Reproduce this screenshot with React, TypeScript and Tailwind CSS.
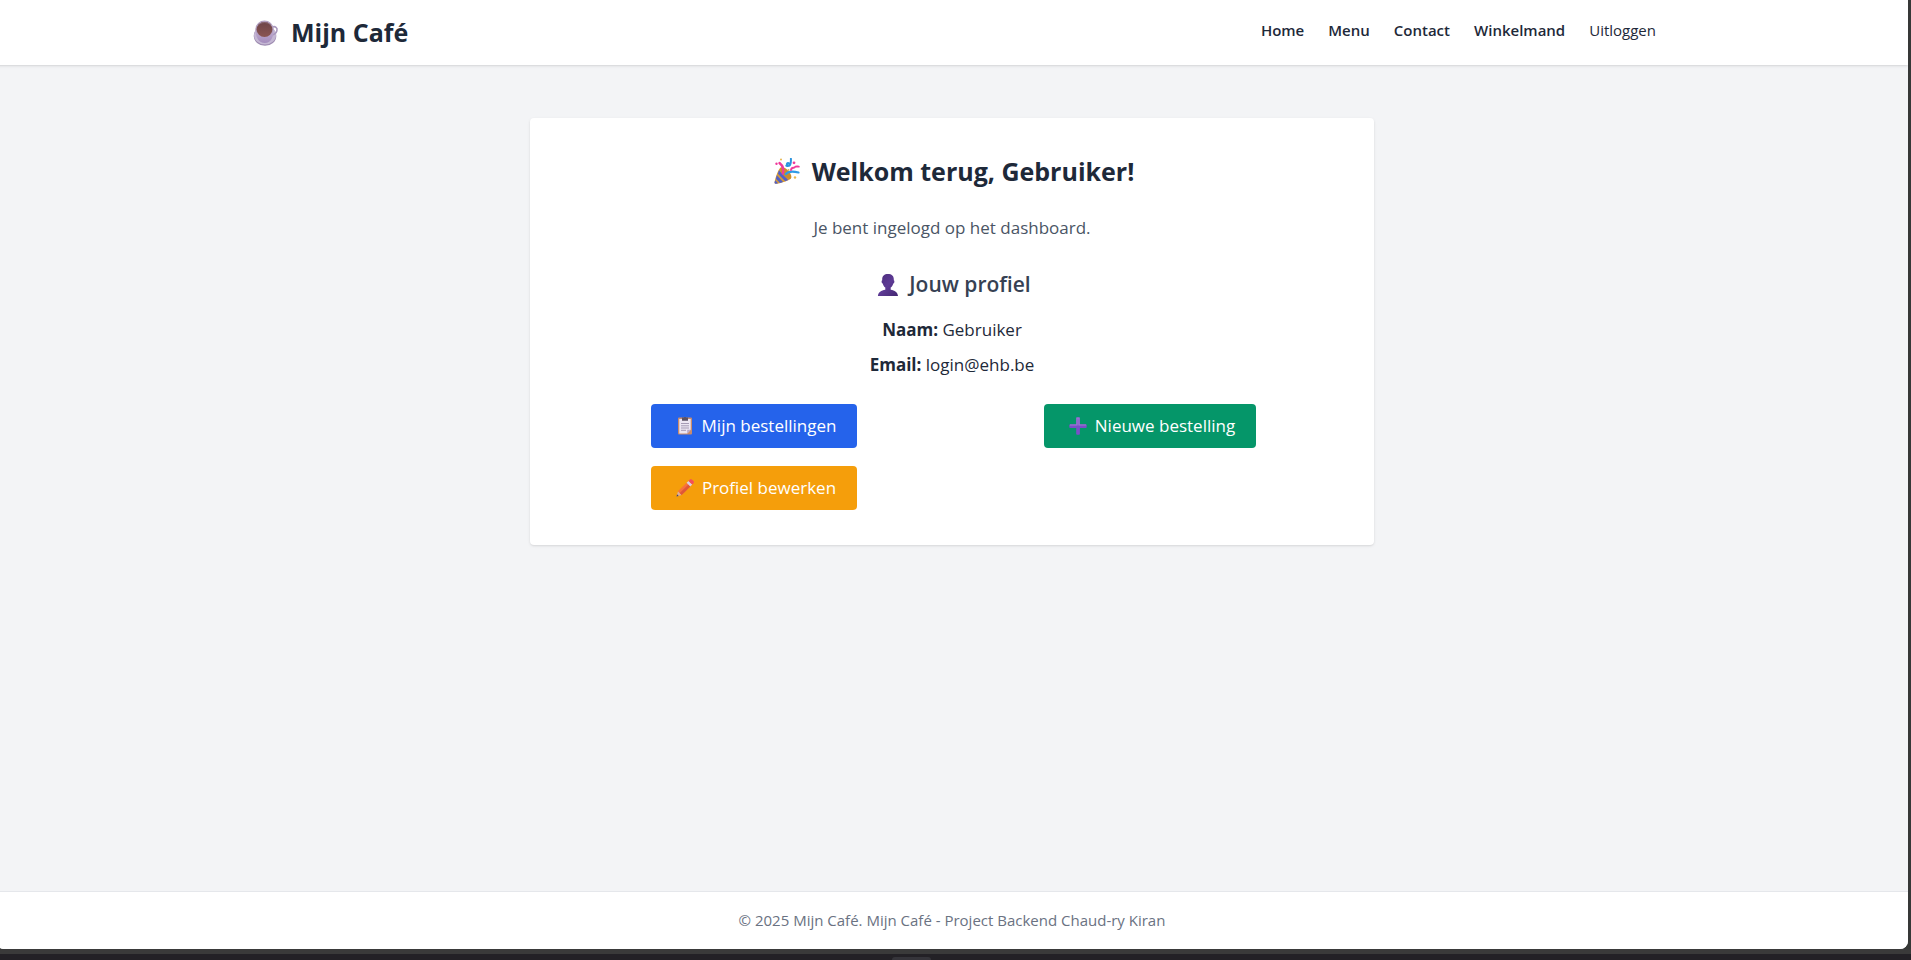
import type { ReactNode } from "react";

function CoffeeIcon() {
  return (
    <svg viewBox="0 0 26 26" className="size-[26px] shrink-0" aria-hidden="true">
      <defs>
        <linearGradient id="cup" x1="0" y1="0" x2="0" y2="1">
          <stop offset="0" stopColor="#c3b0d2" />
          <stop offset="1" stopColor="#a48cbd" />
        </linearGradient>
        <linearGradient id="brew" x1="0" y1="0" x2="0" y2="1">
          <stop offset="0" stopColor="#6e4448" />
          <stop offset="1" stopColor="#8a5552" />
        </linearGradient>
      </defs>
      <ellipse cx="12" cy="16" rx="11.3" ry="9.800" fill="#9d8bb0" />
      <ellipse cx="12" cy="15" rx="11" ry="9.600" fill="#c4b7d3" />
      <path d="M19 7.200c3.200-1.500 5.800.6 4.900 3.600-.7 2.400-3 4-5.400 4.300" fill="none" stroke="#a998bd" strokeWidth="1.600" />
      <path d="M2.300 8.500c0 8.500 3.400 14.500 9.500 14.500s9-6 9-14.500z" fill="url(#cup)" />
      <ellipse cx="11.500" cy="8.800" rx="9" ry="8.300" fill="#b3a0c0" />
      <ellipse cx="11.500" cy="9.500" rx="7.900" ry="7.500" fill="url(#brew)" />
      <path d="M5.500 5c2.700-3 8.700-3.500 12 0" fill="none" stroke="#8a6772" strokeWidth="1" />
    </svg>
  );
}

function PartyIcon() {
  return (
    <svg viewBox="0 0 26 26" className="size-[26px] shrink-0" aria-hidden="true">
      <path d="M6.500 9.500 17 20.500c-3 2.500-9 4.300-14.500 5.300C.8 26 .3 25.300.6 24 1.700 19 3.800 12.500 6.500 9.500Z" fill="#d79a35" />
      <path d="M5 12.300 14.200 22l-3 1.300-7.300-7.500zM2.800 17.300l6.300 6.700-3.100.9-4.100-4.200zM1.200 22.300l2.900 3-2 .4c-1.200.2-1.700-.3-1.500-1.400z" fill="#5260c8" />
      <ellipse cx="11.800" cy="15" rx="3.400" ry="7.400" transform="rotate(-43 11.800 15)" fill="#c98d2b" />
      <path d="M8.800 15.500c1-3 1.200-6.800-3.300-10.500" fill="none" stroke="#ef3a9b" strokeWidth="2.400" strokeLinecap="round" />
      <path d="M12.300 7.600c2.500 1.300 4-.7 2.700-2.300-1.300-1.200-3 .6-1.300 2.200 2 1.200 3.500-.8 3.200-6.700" fill="none" stroke="#2b94df" strokeWidth="2" strokeLinecap="round" />
      <path d="M11.800 16.200c2-2.700 6.200-3.300 12.700-1.700" fill="none" stroke="#2f9ae5" strokeWidth="2.200" strokeLinecap="round" />
      <path d="M17 12c.2-3.200 3.400-1.500 4-3 .5-.8 2-.5 3.800-.4" fill="none" stroke="#ef3a9b" strokeWidth="1.900" strokeLinecap="round" />
      <circle cx="2.500" cy="5.800" r="1.200" fill="#ef3a9b" />
      <circle cx="20" cy="4.800" r="1.400" fill="#ef3a9b" />
      <circle cx="7" cy="1.600" r="1" fill="#e7b64c" />
      <circle cx="21" cy="19.500" r="1.200" fill="#e7b64c" />
      <circle cx="14.500" cy="12" r="1" fill="#e7b64c" />
    </svg>
  );
}

function PersonIcon() {
  return (
    <svg viewBox="0 0 22 22" className="size-[22px] shrink-0" aria-hidden="true">
      <defs>
        <linearGradient id="person" x1="0" y1="0" x2="1" y2="1">
          <stop offset="0" stopColor="#4b2d7b" />
          <stop offset="0.500" stopColor="#5d3a94" />
          <stop offset="1" stopColor="#432770" />
        </linearGradient>
      </defs>
      <path
        d="M11 0c3.700 0 5.800 2 5.800 5v1.200c.9.200.9 3-.5 3.200-.5 1.900-1.500 3.300-2.600 4.100v2.300c4 .5 7 2.700 7.300 6.200H.9c.3-3.500 3.400-5.700 7.400-6.200v-2.300c-1.100-.8-2.100-2.200-2.600-4.100-1.400-.2-1.400-3-.5-3.200V5C5.200 2 7.300 0 11 0Z"
        fill="url(#person)"
      />
    </svg>
  );
}

function ClipboardIcon() {
  return (
    <svg viewBox="0 0 18 18" className="size-[18px] shrink-0" aria-hidden="true">
      <rect x="2" y="0.500" width="14" height="17" rx="1" fill="#c98b6b" />
      <path d="M3.300 2h11.400v10.800l-3.500 3.700H3.300z" fill="#ece6f3" />
      <path d="M14.700 12.800h-3.500v3.700z" fill="#b9a9cb" />
      <path d="M6 .5h1.800C8-.2 10-.2 10.200.500H12v3.300H6z" fill="#5b5264" />
      <path d="M5 6.500h8M5 8.800h8M5 11h8M5 13.300h5" stroke="#a59ab5" strokeWidth="1" />
    </svg>
  );
}

function PlusIcon() {
  return (
    <svg viewBox="0 0 18 18" className="size-[18px] shrink-0" aria-hidden="true">
      <rect x="0.300" y="7.300" width="17.400" height="3.600" rx="0.900" fill="#7a4fc9" />
      <rect x="7.200" y="0.300" width="3.700" height="17.400" rx="0.900" fill="#7a4fc9" />
      <path d="M1 8h7V1h2v7h7" fill="none" stroke="#9c7fd0" strokeWidth="1.200" />
    </svg>
  );
}

function PencilIcon() {
  return (
    <svg viewBox="0 0 18 18" className="size-[18px] shrink-0" aria-hidden="true">
      <path d="M.5 17.500 2 12.200l3.700 3.700z" fill="#dcae9a" />
      <path d="m.5 17.500.6-2.200 1.600 1.600z" fill="#49405c" />
      <path d="m2 12.200 8.600-8.500 3.700 3.700-8.600 8.500z" fill="#f8713c" />
      <path d="m3.800 14 8.600-8.500 1.900 1.900-8.600 8.500z" fill="#df5738" />
      <path d="m10.600 3.700 1.900-1.800 3.700 3.700-1.900 1.800z" fill="#d8cfe6" />
      <path d="m12.500 1.900 1.300-1.300c.7-.6 1.400-.6 2.100 0l1.500 1.500c.7.700.7 1.500.1 2.200l-1.300 1.300z" fill="#f4505a" />
    </svg>
  );
}

const links = ["Home", "Menu", "Contact", "Winkelmand"];

function Action({ color, icon, children }: { color: string; icon: ReactNode; children: ReactNode }) {
  return (
    <a
      href="#"
      className={`flex h-11 items-center gap-2 rounded pr-[21px] pl-[25px] text-[17px] whitespace-nowrap text-white ${color}`}
    >
      {icon}
      {children}
    </a>
  );
}

export default function App() {
  return (
    <div className="flex h-screen flex-col overflow-hidden bg-[#232126] font-['Open_Sans','Noto_Sans',sans-serif] text-gray-800">
      <div className="flex flex-1 flex-col border-b-[5px] border-[#3a3a3a] bg-[#363837] pr-[3px]">
        <div className="-ml-1 flex flex-1 flex-col overflow-hidden rounded-b-lg bg-gray-100">
          <header className="z-10 bg-white shadow">
            <div className="mx-auto flex h-[65px] max-w-[1408px] items-center justify-between pl-[5px]">
              <a href="#" className="flex items-center gap-3 text-[25px] font-bold">
                <CoffeeIcon />
                Mijn Café
              </a>
              <nav className="flex items-center gap-6 pb-1 text-[15px]">
                {links.map((label) => (
                  <a key={label} href="#" className="font-semibold">
                    {label}
                  </a>
                ))}
                <button type="button">Uitloggen</button>
              </nav>
            </div>
          </header>

          <main className="flex-1 pt-[53px]">
            <section className="mx-auto max-w-[844px] rounded bg-white p-[35px] text-center shadow">
              <h1 className="mb-[26px] flex items-center justify-center gap-3 pl-1 text-[25px] leading-9 font-bold">
                <PartyIcon />
                Welkom terug, Gebruiker!
              </h1>
              <p className="mb-7 text-[17px] leading-[26px] text-gray-600">Je bent ingelogd op het dashboard.</p>
              <h2 className="mb-[17px] flex items-center justify-center gap-[10px] pl-1 text-[21px] leading-[31px] font-semibold text-gray-700">
                <PersonIcon />
                Jouw profiel
              </h2>
              <p className="mb-[9px] text-[17px] leading-[26px]">
                <strong>Naam:</strong> Gebruiker
              </p>
              <p className="text-[17px] leading-[26px]">
                <strong>Email:</strong> login@ehb.be
              </p>
              <div className="mt-[26px] grid grid-cols-2 justify-items-center gap-[18px]">
                <Action color="bg-[#2563eb]" icon={<ClipboardIcon />}>
                  Mijn bestellingen
                </Action>
                <Action color="bg-[#059669]" icon={<PlusIcon />}>
                  Nieuwe bestelling
                </Action>
                <Action color="bg-[#f59e0b]" icon={<PencilIcon />}>
                  Profiel bewerken
                </Action>
              </div>
            </section>
          </main>

          <footer className="border-t border-gray-200 bg-white py-[18px] text-center text-[15px] leading-[21px] text-gray-500">
            © 2025 Mijn Café. Mijn Café - Project Backend Chaud-ry Kiran
          </footer>
        </div>
      </div>
      <div className="flex h-[6px] items-end justify-center pr-[88px]">
        <div className="h-[3px] w-[39px] rounded-t bg-[#35343a]" />
      </div>
    </div>
  );
}
